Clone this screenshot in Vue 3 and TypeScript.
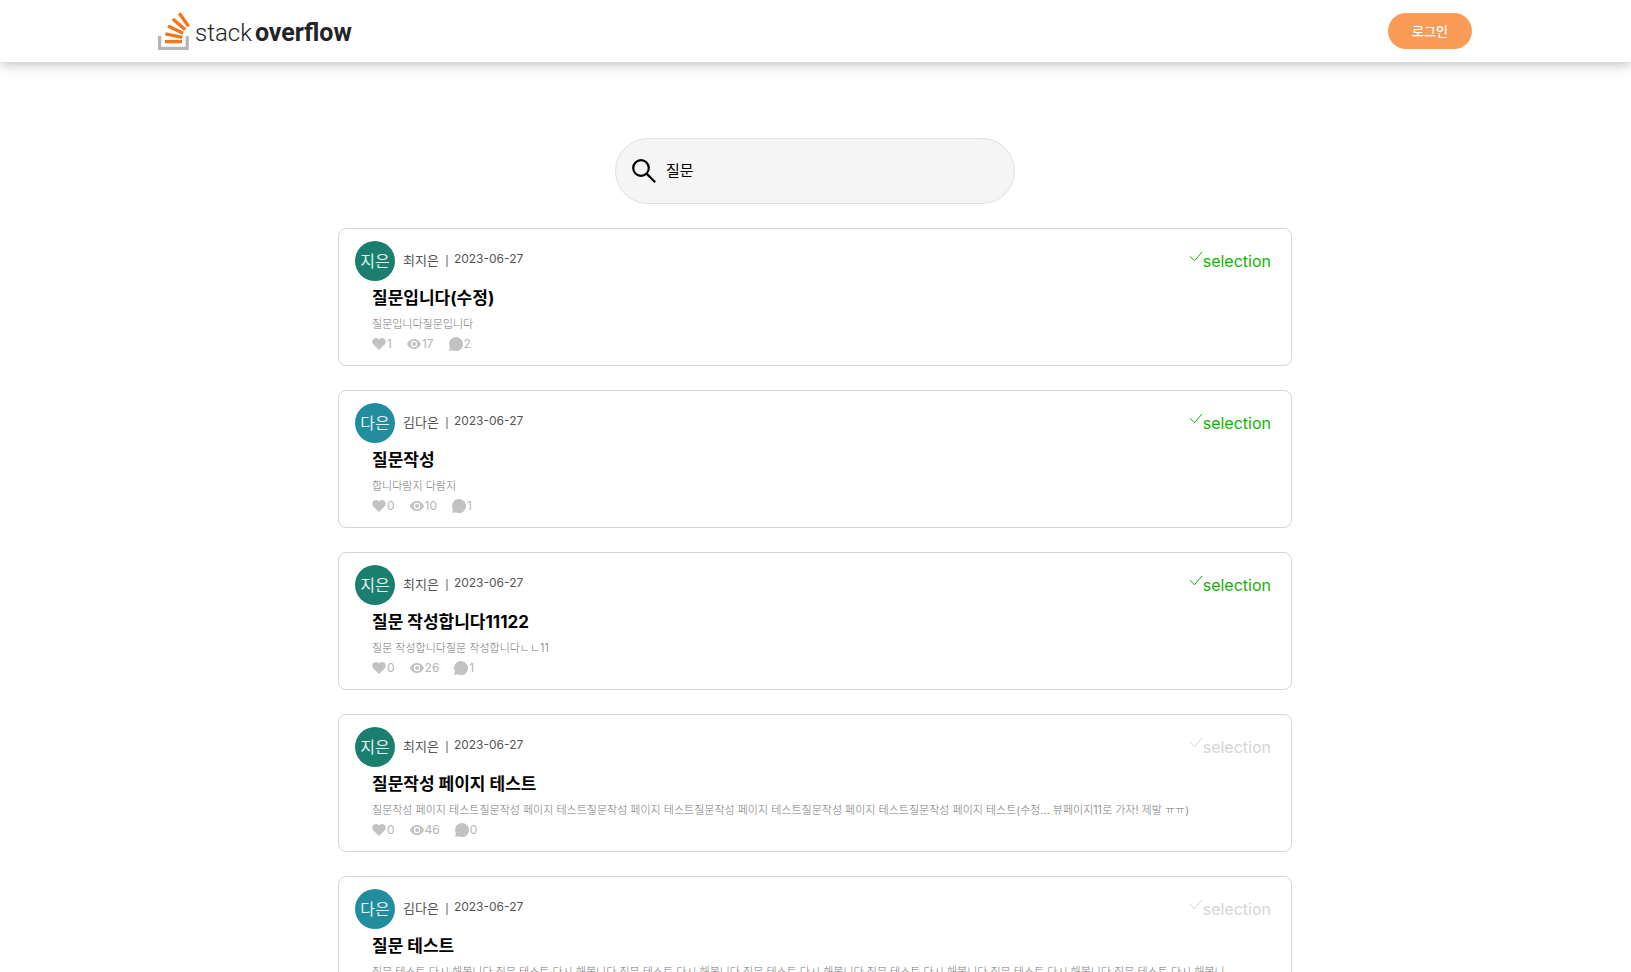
<script setup lang="ts">
import { ref } from 'vue'

interface Question {
  id: number
  author: string
  initials: string
  tone: 'green' | 'teal'
  date: string
  title: string
  excerpt: string
  likes: number
  views: number
  answers: number
  selected: boolean
}

const keyword = ref('질문')

const questions: Question[] = [
  { id: 1, author: '최지은', initials: '지은', tone: 'green', date: '2023-06-27', title: '질문입니다(수정)', excerpt: '질문입니다질문입니다', likes: 1, views: 17, answers: 2, selected: true },
  { id: 2, author: '김다은', initials: '다은', tone: 'teal', date: '2023-06-27', title: '질문작성', excerpt: '합니다람지 다람지', likes: 0, views: 10, answers: 1, selected: true },
  { id: 3, author: '최지은', initials: '지은', tone: 'green', date: '2023-06-27', title: '질문 작성합니다11122', excerpt: '질문 작성합니다질문 작성합니다ㄴㄴ11', likes: 0, views: 26, answers: 1, selected: true },
  { id: 4, author: '최지은', initials: '지은', tone: 'green', date: '2023-06-27', title: '질문작성 페이지 테스트', excerpt: '질문작성 페이지 테스트'.repeat(6) + '(수정... 뷰페이지11로 가자! 제발 ㅠㅠ)', likes: 0, views: 46, answers: 0, selected: false },
  { id: 5, author: '김다은', initials: '다은', tone: 'teal', date: '2023-06-27', title: '질문 테스트', excerpt: '질문 테스트 다시 해봅니다 '.repeat(6) + '질문 테스트 다시 해봅니', likes: 0, views: 12, answers: 0, selected: false },
]
</script>

<template>
  <div class="page">
    <header class="header">
      <div class="header-inner">
        <a class="logo" href="#" aria-label="stack overflow">
          <svg class="logo-mark" viewBox="0 0 32 38" aria-hidden="true">
            <path d="M1.6 24v12.4h27.6V24" fill="none" stroke="#b5b5b5" stroke-width="3.2" />
            <g stroke="#f2761d" stroke-width="3.4">
              <path d="M7 29.6h17" />
              <path d="M7.4 21.8l17 3.6" />
              <path d="M10 14l15.2 7.2" />
              <path d="M14.8 7l12.4 10.6" />
              <path d="M21.2 1.2l9.4 13" />
            </g>
          </svg>
          <span class="logo-text"><span class="logo-stack">stack</span><span class="logo-overflow">overflow</span></span>
        </a>
        <button class="login" type="button">로그인</button>
      </div>
    </header>

    <main class="main">
      <form class="search" role="search" @submit.prevent>
        <label class="search-label" for="keyword" aria-label="검색">
          <svg viewBox="0 0 24 24" aria-hidden="true">
            <circle cx="9" cy="9" r="7.8" />
            <path d="M14.6 14.6l8.6 8.6" />
          </svg>
        </label>
        <input id="keyword" v-model="keyword" class="search-input" type="text" />
      </form>

      <ul class="list">
        <li v-for="q in questions" :key="q.id" class="card">
          <div class="card-head">
            <span class="avatar" :class="q.tone">{{ q.initials }}</span>
            <span class="author">{{ q.author }}</span>
            <span class="divider"></span>
            <time class="date" :datetime="q.date">{{ q.date }}</time>
            <span class="selection" :class="{ on: q.selected }">
              <svg class="check" viewBox="0 0 14 20" aria-hidden="true"><path d="M1 5.2l4.4 4.6L13 1" /></svg>selection
            </span>
          </div>
          <div class="card-body">
            <h2 class="title"><a href="#">{{ q.title }}</a></h2>
            <p class="excerpt">{{ q.excerpt }}</p>
            <div class="stats">
              <span class="stat">
                <svg viewBox="0 0 14 14" aria-hidden="true"><path d="M7 13L1.4 7.6C-.3 5.800 0 3 1.800 1.700 3.500.5 5.700.9 7 2.500 8.300.9 10.500.5 12.200 1.700 14 3 14.300 5.800 12.600 7.600z" /></svg>{{ q.likes }}
              </span>
              <span class="stat">
                <svg viewBox="0 0 14 14" aria-hidden="true"><path fill-rule="evenodd" d="M0 7c1-2.800 3.800-5 7-5s6 2.200 7 5c-1 2.800-3.800 5-7 5S1 9.800 0 7zm7-3.200a3.200 3.200 0 1 0 0 6.400 3.200 3.200 0 0 0 0-6.400zm0 1.200a2 2 0 1 1 0 4 2 2 0 0 1 0-4z" /></svg>{{ q.views }}
              </span>
              <span class="stat">
                <svg viewBox="0 0 14 14" aria-hidden="true"><path d="M7 0a7 7 0 1 1-3.200 13.200L.2 14l.7-3.600A7 7 0 0 1 7 0z" /></svg>{{ q.answers }}
              </span>
            </div>
          </div>
        </li>
      </ul>
    </main>
  </div>
</template>

<style>
body {
  margin: 0;
  background: #fff;
}
</style>

<style scoped>
.page,
.page * {
  box-sizing: border-box;
}

.page {
  font-family: Inter, 'Noto Sans CJK KR', sans-serif;
  color: #000;
}

.page a {
  color: inherit;
  text-decoration: none;
}

.header {
  position: relative;
  height: 62px;
  padding: 0 25px 0 24px;
  background: #fff;
  box-shadow: 0 2px 12px rgba(0, 0, 0, 0.28);
}

.header-inner {
  display: flex;
  align-items: center;
  justify-content: space-between;
  max-width: 1314px;
  height: 100%;
  margin: 0 auto;
}

.logo {
  display: flex;
  align-items: center;
  gap: 5px;
}

.logo-mark {
  width: 32px;
  height: 38px;
}

.logo-text {
  display: flex;
  align-items: baseline;
  gap: 3px;
  padding-top: 4px;
  font-family: Roboto, sans-serif;
  line-height: 32px;
}

.page .logo-text {
  color: #222426;
}

.logo-stack {
  font-size: 24px;
  font-weight: 300;
}

.logo-overflow {
  font-size: 25px;
  font-weight: 700;
}

.login {
  width: 84px;
  height: 36px;
  padding: 0 0 2px;
  border: 0;
  border-radius: 18px;
  background: #fb9b58;
  color: #fff;
  font-family: inherit;
  font-size: 13px;
  font-weight: 500;
}

.main {
  display: flex;
  flex-direction: column;
  align-items: center;
  gap: 24px;
  padding: 76px 25px 24px 24px;
}

.search {
  display: flex;
  align-items: center;
  gap: 10px;
  width: 100%;
  max-width: 400px;
  height: 66px;
  padding: 0 16px;
  border: 1px solid #dfe0e6;
  border-radius: 33px;
  background: #f5f5f5;
}

.search-label {
  display: flex;
}

.search-label svg {
  width: 24px;
  height: 24px;
  fill: none;
  stroke: #000;
  stroke-width: 2.2;
}

.search-input {
  flex: 1;
  min-width: 0;
  height: 40px;
  padding: 0 0 3px;
  border: 0;
  outline: 0;
  background: transparent;
  color: #000;
  font-family: inherit;
  font-size: 15px;
}

.list {
  display: flex;
  flex-direction: column;
  gap: 24px;
  width: 100%;
  max-width: 954px;
  margin: 0;
  padding: 0;
  list-style: none;
}

.card {
  padding: 12px 20px 12px 16px;
  border: 1px solid #d5d5d5;
  border-radius: 8px;
}

.card-head {
  display: flex;
  align-items: center;
  height: 40px;
}

.avatar {
  display: flex;
  align-items: center;
  justify-content: center;
  width: 40px;
  height: 40px;
  margin-right: 8px;
  padding-bottom: 2px;
  border-radius: 50%;
  color: #e4f1ef;
  font-size: 16px;
}

.avatar.green {
  background: #1a7f6e;
}

.avatar.teal {
  background: #218d9f;
}

.author {
  padding-bottom: 3px;
  color: #555;
  font-size: 13px;
}

.divider {
  width: 2px;
  height: 12px;
  margin: 0 6px 0 7px;
  background: #b0b0b0;
}

.date {
  padding-bottom: 6px;
  color: #555;
  font-size: 12px;
}

.selection {
  display: flex;
  align-items: center;
  margin-left: auto;
  color: #d5d5d5;
  font-size: 16px;
  line-height: 20px;
}

.selection.on {
  color: #12b300;
}

.check {
  width: 14px;
  height: 20px;
  fill: none;
  stroke: currentColor;
}

.card-body {
  padding-left: 17px;
}

.title {
  margin: 4px 0;
  overflow: hidden;
  font-size: 17px;
  font-weight: 700;
  line-height: 26px;
  white-space: nowrap;
}

.excerpt {
  margin: 0 0 2px;
  overflow: hidden;
  color: #777;
  font-size: 11px;
  font-weight: 300;
  line-height: 18px;
  white-space: nowrap;
}

.stats {
  display: flex;
  gap: 15px;
  color: #b5b5b5;
  font-size: 12px;
  line-height: 18px;
}

.stat {
  display: flex;
  align-items: center;
  gap: 1px;
}

.stat svg {
  width: 14px;
  height: 14px;
  fill: #c2c2c2;
}
</style>
